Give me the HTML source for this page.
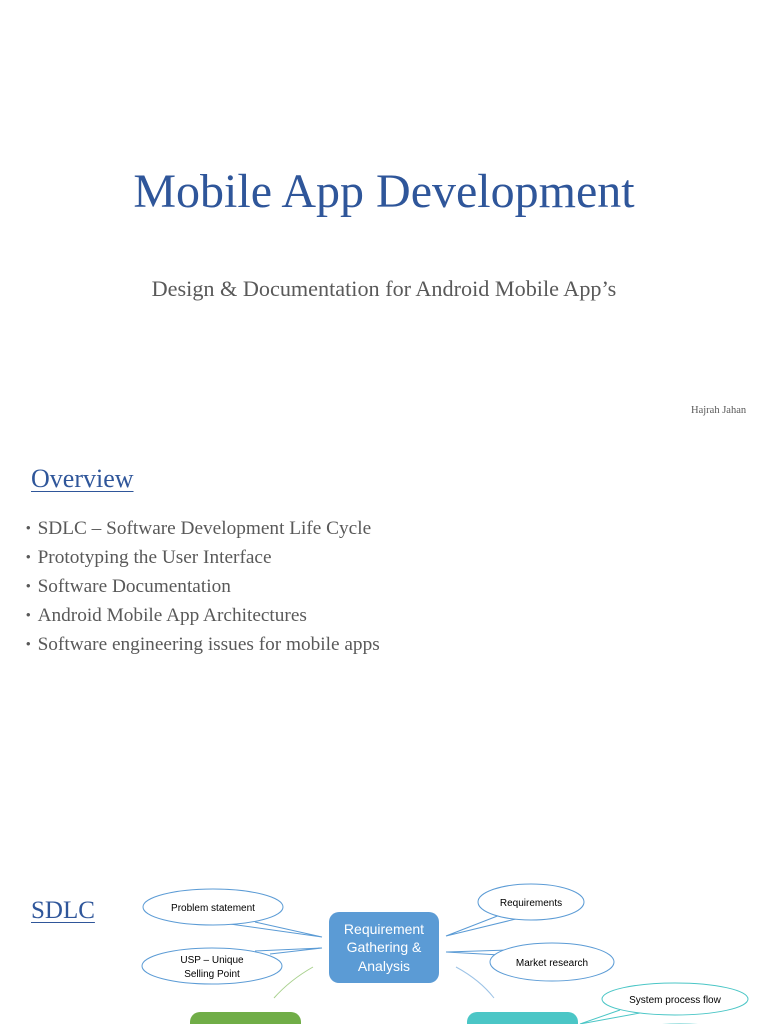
<!DOCTYPE html>
<html><head><meta charset="utf-8"><style>
body{margin:0;width:768px;height:1024px;overflow:hidden;background:#fff;position:relative;font-family:"Liberation Serif",serif}
.a{position:absolute;white-space:nowrap}
.t{left:0;width:768px;text-align:center;top:164px;font-size:48px;color:#2f569a}
.s{left:0;width:768px;text-align:center;top:276px;font-size:22.2px;color:#595959}
.h{font-size:10.5px;color:#595959;left:691px;top:405px}
.ov{left:31px;top:464px;font-size:26px;color:#2f569a;text-decoration:underline;text-decoration-thickness:1px;text-underline-offset:4px}
.b{left:26px;font-size:19.3px;color:#595959}
.b span{font-family:"Liberation Sans",sans-serif;font-size:13px;margin-right:7px;position:relative;top:-2px}
svg text{font-family:"Liberation Sans",sans-serif}
</style></head><body>
<div class="a t">Mobile App Development</div>
<div class="a s">Design &amp; Documentation for Android Mobile App’s</div>
<div class="a h">Hajrah Jahan</div>
<div class="a ov">Overview</div>
<div class="a b" style="top:518px"><span>•</span>SDLC – Software Development Life Cycle</div>
<div class="a b" style="top:547px"><span>•</span>Prototyping the User Interface</div>
<div class="a b" style="top:576px"><span>•</span>Software Documentation</div>
<div class="a b" style="top:605px"><span>•</span>Android Mobile App Architectures</div>
<div class="a b" style="top:634px"><span>•</span>Software engineering issues for mobile apps</div>
<div class="a ov" style="top:897px;font-size:25px">SDLC</div>
<svg class="a" style="left:0;top:0" width="768" height="1024">
<g fill="#fff" stroke="#5b9bd5" stroke-width="1">
<path d="M255 922 L322 937 L230 924"/>
<ellipse cx="213" cy="907" rx="70" ry="18"/>
<path d="M255 951 L322 948 L270 954"/>
<ellipse cx="212" cy="966" rx="70" ry="18"/>
<path d="M500 915 L446 936 L520 918"/>
<ellipse cx="531" cy="902" rx="53" ry="18"/>
<path d="M500 955 L446 952 L510 950"/>
<ellipse cx="552" cy="962" rx="62" ry="19"/>
</g>
<g fill="#fff" stroke="#4bc6c6">
<path d="M620 1010 L580 1024 L640 1013"/>
<ellipse cx="675" cy="999" rx="73" ry="16"/>
<ellipse cx="680" cy="1040" rx="70" ry="16"/>
</g>
<path d="M313 967 Q290 980 274 998" stroke="#a9d18e" fill="none"/>
<path d="M456 967 Q480 980 494 998" stroke="#9dc3e6" fill="none"/>
<rect x="329" y="912" width="110" height="71" rx="10" fill="#5b9bd5"/>
<rect x="190" y="1012" width="111" height="40" rx="10" fill="#70ad47"/>
<rect x="467" y="1012" width="111" height="40" rx="10" fill="#4bc6c6"/>
<g font-size="10" fill="#000" text-anchor="middle">
<text x="213" y="911">Problem statement</text>
<text x="212" y="963">USP – Unique</text>
<text x="212" y="977">Selling Point</text>
<text x="531" y="906">Requirements</text>
<text x="552" y="966">Market research</text>
<text x="675" y="1003">System process flow</text>
</g>
<g font-size="14" fill="#fff" text-anchor="middle">
<text x="384" y="934">Requirement</text>
<text x="384" y="952">Gathering &amp;</text>
<text x="384" y="971">Analysis</text>
</g>
</svg>
</body></html>
